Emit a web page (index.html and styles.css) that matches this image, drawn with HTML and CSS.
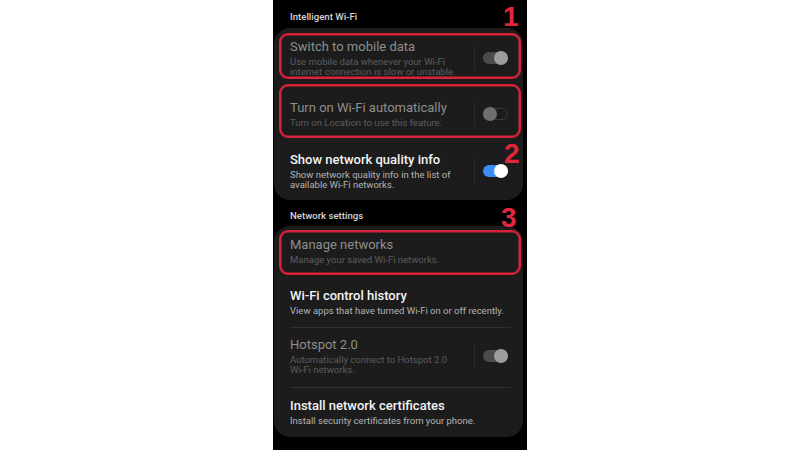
FILE: index.html
```html
<!DOCTYPE html>
<html>
<head>
<meta charset="utf-8">
<link rel="stylesheet" href="styles.css">
</head>
<body>
<div class="phone">
  <div class="section-title st-1">Intelligent Wi-Fi</div>
  <div class="card card-1">
    <div class="row marked r1 disabled">
      <div class="text">
        <div class="title">Switch to mobile data</div>
        <div class="sub">Use mobile data whenever your Wi-Fi<br>internet connection is slow or unstable.</div>
      </div>
      <div class="ctrl"><span class="vline"></span><span class="toggle on-dim"><span class="knob"></span></span></div>
    </div>
    <div class="row marked r2 disabled">
      <div class="text">
        <div class="title">Turn on Wi-Fi automatically</div>
        <div class="sub">Turn on Location to use this feature.</div>
      </div>
      <div class="ctrl"><span class="vline"></span><span class="toggle off-dim"><span class="knob"></span></span></div>
    </div>
    <div class="row r3">
      <div class="text">
        <div class="title">Show network quality info</div>
        <div class="sub">Show network quality info in the list of<br>available Wi-Fi networks.</div>
      </div>
      <div class="ctrl"><span class="vline"></span><span class="toggle on"><span class="knob"></span></span></div>
    </div>
  </div>
  <div class="section-title st-2">Network settings</div>
  <div class="card card-2">
    <div class="row marked r4 disabled">
      <div class="text">
        <div class="title">Manage networks</div>
        <div class="sub">Manage your saved Wi-Fi networks.</div>
      </div>
    </div>
    <div class="row r5">
      <div class="text">
        <div class="title">Wi-Fi control history</div>
        <div class="sub">View apps that have turned Wi-Fi on or off recently.</div>
      </div>
    </div>
    <div class="divider"></div>
    <div class="row r6 disabled">
      <div class="text">
        <div class="title">Hotspot 2.0</div>
        <div class="sub">Automatically connect to Hotspot 2.0<br>Wi-Fi networks.</div>
      </div>
      <div class="ctrl"><span class="vline"></span><span class="toggle on-dim"><span class="knob"></span></span></div>
    </div>
    <div class="divider"></div>
    <div class="row r7">
      <div class="text">
        <div class="title">Install network certificates</div>
        <div class="sub">Install security certificates from your phone.</div>
      </div>
    </div>
  </div>
  <span class="num n1">1</span>
  <span class="num n2">2</span>
  <span class="num n3">3</span>
</div>
</body>
</html>
```
FILE: styles.css
```css
html, body {
  margin: 0;
  background: #ffffff;
}
body {
  font-family: Roboto, "Noto Sans", sans-serif;
}
.phone {
  position: relative;
  width: 254px;
  height: 450px;
  margin: 0 auto;
  background: #000000;
  display: flex;
  flex-direction: column;
}
.section-title {
  padding-left: 17px;
  font-size: 9.6px;
  line-height: 12px;
  font-weight: 500;
  color: #d6d6d6;
}
.st-1 { padding-top: 11px; padding-bottom: 5px; }
.st-2 { padding-top: 10px; padding-bottom: 4px; }
.card {
  margin: 0 4px 0 1px;
  background: #1c1c1c;
  border-radius: 16px;
  display: flex;
  flex-direction: column;
  padding-left: 5px;
  padding-right: 2px;
}
.card-1 { padding-top: 5px; padding-bottom: 2px; }
.card-2 { padding-top: 4px; padding-bottom: 1px; }
.row {
  display: flex;
  align-items: center;
  border: 2px solid transparent;
  border-radius: 9px;
  padding-left: 9px;
  padding-right: 11px;
}
.row.marked {
  border-color: #d9233a;
  box-shadow: inset 0 0 0 0.5px #d9233a;
}
.r1 { padding-top: 4px; padding-bottom: 0; margin-bottom: 5px; }
.r2 { padding-top: 14px; padding-bottom: 8px; }
.r3 { padding-top: 12px; padding-bottom: 6px; }
.r4 { padding-top: 5px; padding-bottom: 8px; }
.r5 { padding-top: 11px; padding-bottom: 9px; }
.r6 { padding-top: 7px; padding-bottom: 10px; }
.r7 { padding-top: 8px; padding-bottom: 8px; }
.text { flex: 1; min-width: 0; }
.title {
  font-size: 13px;
  line-height: 16px;
  font-weight: 500;
  color: #f3f3f3;
  margin-bottom: 2px;
  white-space: nowrap;
}
.sub {
  font-size: 9.5px;
  line-height: 10px;
  color: #b4b4b4;
  white-space: nowrap;
}
.disabled .title { color: #8e8e8e; font-weight: 400; }
.disabled .sub { color: #5c5c5c; }
.ctrl {
  display: flex;
  align-items: center;
  gap: 8px;
}
.vline {
  width: 1px;
  height: 24px;
  background: #2c2c2c;
}
.toggle {
  width: 25px;
  height: 12px;
  border-radius: 6px;
  display: flex;
  align-items: center;
  box-sizing: border-box;
}
.knob {
  width: 14px;
  height: 14px;
  border-radius: 50%;
  flex: none;
}
.toggle.on-dim { background: #4b4b4b; justify-content: flex-end; }
.toggle.on-dim .knob { background: #9d9d9d; }
.toggle.off-dim { border: 1.5px solid #3a3a3a; justify-content: flex-start; }
.toggle.off-dim .knob { background: #6e6e6e; margin-left: -1.5px; }
.toggle.on { background: #3b8cf6; justify-content: flex-end; }
.toggle.on .knob { background: #ffffff; }
.divider {
  height: 1px;
  background: #2f2f2f;
  margin: 0 10px 0 11px;
}
.num {
  position: absolute;
  font-family: "Liberation Sans", Arial, sans-serif;
  font-weight: 700;
  font-size: 28px;
  line-height: 33px;
  color: #e2263d;
}
.n1 { left: 230px; top: 0; }
.n2 { left: 231px; top: 137px; }
.n3 { left: 228px; top: 201px; }
```
